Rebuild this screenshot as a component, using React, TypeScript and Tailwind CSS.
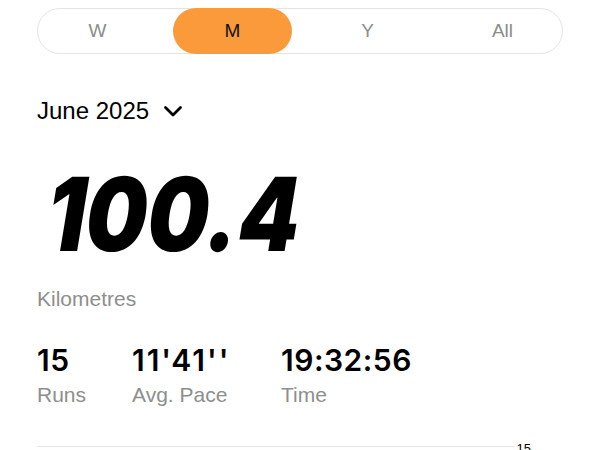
const tabs = ['W', 'M', 'Y', 'All'];

const stats = [
  { value: '15', label: 'Runs' },
  { value: "11'41''", label: 'Avg. Pace' },
  { value: '19:32:56', label: 'Time' },
];

export default function App() {
  return (
    <div className="w-[600px] h-[450px] overflow-hidden bg-white px-[37px] pt-[8px] font-['Liberation_Sans',Arial,sans-serif]">
      {/* period switch */}
      <div className="flex h-[46px] items-stretch justify-between rounded-full border border-[#e4e4e4]">
        {tabs.map((t) => (
          <div
            key={t}
            className={`-my-px flex w-[119px] items-center justify-center rounded-full text-[19px] ${
              t === 'M' ? 'bg-[#fa9a3b] text-[#111]' : 'text-[#8c8c8c]'
            }`}
          >
            {t}
          </div>
        ))}
      </div>

      <div className="mt-[43px] flex items-center gap-[14px] text-[24px] leading-[28px] text-black">
        <span>June 2025</span>
        <svg width="20" height="13" viewBox="0 0 20 13" fill="none" stroke="black" strokeWidth="2.8" strokeLinecap="round" strokeLinejoin="round">
          <polyline points="2.5,2.5 10,10 17.5,2.5" />
        </svg>
      </div>

      <div className="mt-[39px] h-[100px] pl-[11px]">
        <div className="inline-block origin-left -skew-x-[11deg] scale-x-[0.85] font-['Inter',sans-serif] text-[102px] font-black leading-[100px] text-black">
          100.4
        </div>
      </div>

      <div className="mt-[23px] text-[21px] leading-[24px] text-[#8e8e8e]">Kilometres</div>

      <div className="mt-[31px] flex">
        {stats.map((s, i) => (
          <div key={s.label} className={`flex flex-col ${i === 0 ? 'w-[95px]' : i === 1 ? 'w-[149px]' : ''}`}>
            <span className={`font-['Inter',sans-serif] text-[30px] font-semibold leading-[36px] text-black ${i === 1 ? 'tracking-[2px]' : 'tracking-[0.5px]'}`}>
              {s.value}
            </span>
            <span className="mt-[5px] text-[21px] leading-[24px] text-[#8e8e8e]">{s.label}</span>
          </div>
        ))}
      </div>

      <div className="relative mt-[39px] mr-[48px] border-t border-[#e6e6e6]">
        <span className="absolute -top-[5px] -right-[16px] text-[13px] leading-[14px] text-black">15</span>
      </div>
    </div>
  );
}
